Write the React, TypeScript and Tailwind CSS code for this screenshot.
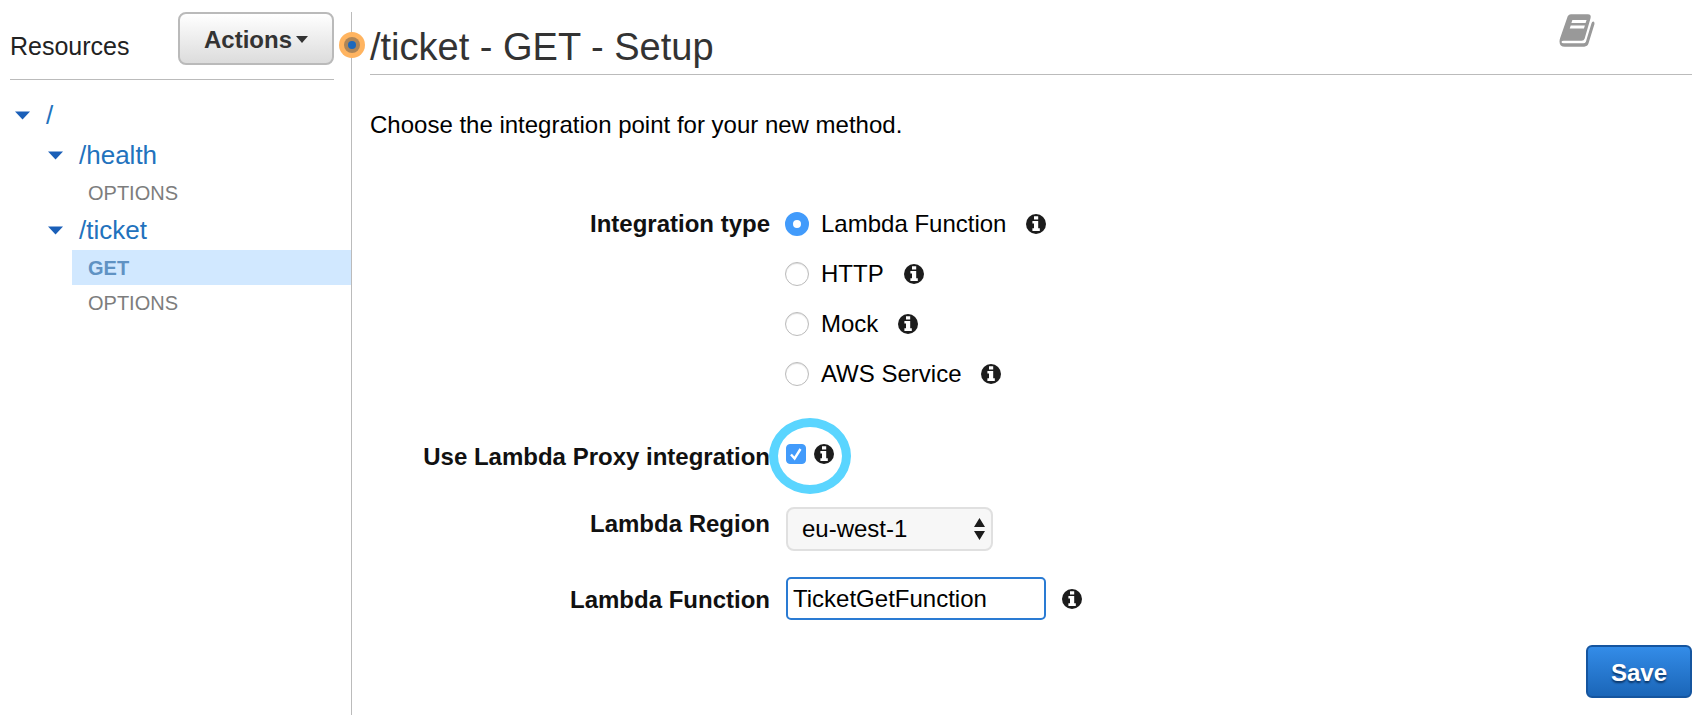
import React from 'react';

const integrationTypes = ['Lambda Function', 'HTTP', 'Mock', 'AWS Service'];

function InfoIcon() {
  return (
    <svg viewBox="0 0 20 20" className="size-5 shrink-0" aria-hidden="true">
      <circle cx="10" cy="10" r="10" fill="#1c1c1c" />
      <path
        d="M8 2.2h4.2v3.2H8zM6.4 7h5.8v7.2h1.6v2.8H6.4v-2.8H8V9.6H6.4z"
        fill="#fff"
      />
    </svg>
  );
}

function BookIcon() {
  return (
    <svg viewBox="0 0 108 100" className="h-[33px] w-9" aria-hidden="true">
      <path
        d="M36 1H87Q98 1 95 13L77 75Q75 81 68 81H14Q7 81 7 85Q7 89 14 89H73Q79 89 81 84L98 28Q100 22 104 23Q108 25 107 30L89 89Q86 99 76 99H17Q1 99 1 83Q1 78 3 73L24 12Q27 1 36 1Z"
        fill="#999"
      />
      <path d="M40 18H83L80 27H37ZM35 35H78L75 44H32Z" fill="#fff" />
    </svg>
  );
}

function Caret() {
  return (
    <svg viewBox="0 0 15 9" className="h-[9px] w-[15px] shrink-0" aria-hidden="true">
      <path d="M0 0.5H15L7.5 8.5Z" fill="#1a5fb8" />
    </svg>
  );
}

function Resource({ name, nested }: { name: string; nested?: boolean }) {
  return (
    <a
      href="#"
      className={`flex h-10 items-center gap-4 text-[26px] leading-10 text-[#2272bd] ${nested ? 'pl-12' : 'pl-[15px]'}`}
    >
      <Caret />
      {name}
    </a>
  );
}

function Method({ name, active }: { name: string; active?: boolean }) {
  return (
    <a
      href="#"
      className={`ml-[72px] flex h-[35px] items-center pl-4 text-xl ${active ? 'bg-[#d1e8ff] font-bold text-[#5f92c3]' : 'text-[#7d7d7d]'}`}
    >
      {name}
    </a>
  );
}

function Sidebar() {
  return (
    <aside className="relative mt-3 w-[352px] shrink-0 border-r border-[#bbb]">
      <div className="ml-[10px] mr-[17px] flex h-[68px] items-start justify-between border-b border-[#bbb]">
        <h2 className="pt-[14px] text-[25px] leading-10 text-[#222]">Resources</h2>
        <button className="flex h-[53px] w-[156px] items-center justify-center gap-1 rounded-lg border-2 border-[#bababa] bg-linear-to-b from-white to-[#dcdcdc] pt-[2px] text-2xl font-bold text-[#333]">
          Actions
          <svg viewBox="0 0 12 7" className="h-[7px] w-3" aria-hidden="true">
            <path d="M0 0H12L6 7Z" fill="#333" />
          </svg>
        </button>
      </div>
      <nav className="pt-[15px]">
        <Resource name="/" />
        <Resource name="/health" nested />
        <Method name="OPTIONS" />
        <Resource name="/ticket" nested />
        <Method name="GET" active />
        <Method name="OPTIONS" />
      </nav>
      <span className="absolute -right-[14px] top-5 flex size-[26px] items-center justify-center rounded-full bg-[#ffb460]">
        <span className="flex size-4 items-center justify-center rounded-full bg-[#ad8558]">
          <span className="size-2 rounded-full bg-[#1b68bd]" />
        </span>
      </span>
    </aside>
  );
}

export default function App() {
  return (
    <div className="flex min-h-screen bg-white font-['Liberation_Sans',Arial,sans-serif] text-2xl text-black">
      <Sidebar />
      <main className="flex min-w-0 grow flex-col pl-[18px] pr-3">
        <header className="flex h-[75px] items-start justify-between border-b border-[#bbb] pr-[97px] pt-[14px]">
          <h1 className="pt-2 text-[38px] leading-[50px] text-[#333]">/ticket - GET - Setup</h1>
          <a href="#" aria-label="Documentation">
            <BookIcon />
          </a>
        </header>
        <p className="mt-8 leading-9">Choose the integration point for your new method.</p>

        <form className="mt-14 flex grow flex-col">
          <fieldset className="flex gap-4" aria-labelledby="type-label">
            <div id="type-label" className="w-[400px] text-right font-bold leading-[50px] text-[#111]">
              Integration type
            </div>
            <div>
              {integrationTypes.map((type, i) => (
                <div key={type} className="flex h-[50px] items-center gap-5">
                  <label className="flex items-center gap-3">
                    <input
                      type="radio"
                      name="type"
                      defaultChecked={i === 0}
                      className="-ml-px size-6 appearance-none rounded-full border border-[#bbb] bg-white shadow-[inset_0_1px_1px_#ddd] checked:border-8 checked:border-[#429bfb] checked:shadow-none"
                    />
                    {type}
                  </label>
                  <InfoIcon />
                </div>
              ))}
            </div>
          </fieldset>

          <div className="mt-[34px] flex h-12 items-center gap-4">
            <label htmlFor="proxy" className="w-[400px] text-right font-bold text-[#111]">
              Use Lambda Proxy integration
            </label>
            <div className="relative flex items-center gap-2 pb-[6px]">
              <div className="absolute -left-[17px] -top-[26px] h-[76px] w-[82px] rounded-[50%] border-[9px] border-[#5ad5ff]" />
              <span className="relative flex size-5">
                <input
                  id="proxy"
                  type="checkbox"
                  defaultChecked
                  className="size-5 appearance-none rounded border border-[#429bfb] bg-[#429bfb]"
                />
                <svg viewBox="0 0 20 20" className="pointer-events-none absolute inset-0" aria-hidden="true">
                  <path d="M5 10.5L8.6 14.5L14.5 5" fill="none" stroke="#fff" strokeWidth="2.4" />
                </svg>
              </span>
              <InfoIcon />
            </div>
          </div>

          <div className="mt-[26px] flex items-start gap-4">
            <label htmlFor="region" className="w-[400px] text-right font-bold leading-[34px] text-[#111]">
              Lambda Region
            </label>
            <div className="relative">
              <select
                id="region"
                className="h-11 w-[207px] appearance-none rounded-lg border-2 border-[#e0e0e0] bg-[#f7f7f7] pl-[14px]"
              >
                <option>eu-west-1</option>
              </select>
              <svg
                viewBox="0 0 11 22"
                className="pointer-events-none absolute right-2 top-[11px] h-[22px] w-[11px]"
                aria-hidden="true"
              >
                <path d="M5.5 0L11 9H0ZM0 13H11L5.5 22Z" fill="#1c1c1c" />
              </svg>
            </div>
          </div>

          <div className="mt-[26px] flex items-center gap-4">
            <label htmlFor="function" className="w-[400px] pt-[2px] text-right font-bold text-[#111]">
              Lambda Function
            </label>
            <input
              id="function"
              type="text"
              defaultValue="TicketGetFunction"
              className="h-[43px] w-[260px] rounded-[5px] border-2 border-[#2a7bd3] bg-white pl-[5px]"
            />
            <InfoIcon />
          </div>

          <div className="mb-[17px] mt-auto flex justify-end pt-6">
            <button
              type="submit"
              className="h-[53px] w-[106px] rounded-md border-2 border-[#15559f] bg-linear-to-b from-[#338ce8] to-[#1b66b8] pt-[2px] font-bold text-white text-shadow-[0_2px_2px_#0a3568]"
            >
              Save
            </button>
          </div>
        </form>
      </main>
    </div>
  );
}
